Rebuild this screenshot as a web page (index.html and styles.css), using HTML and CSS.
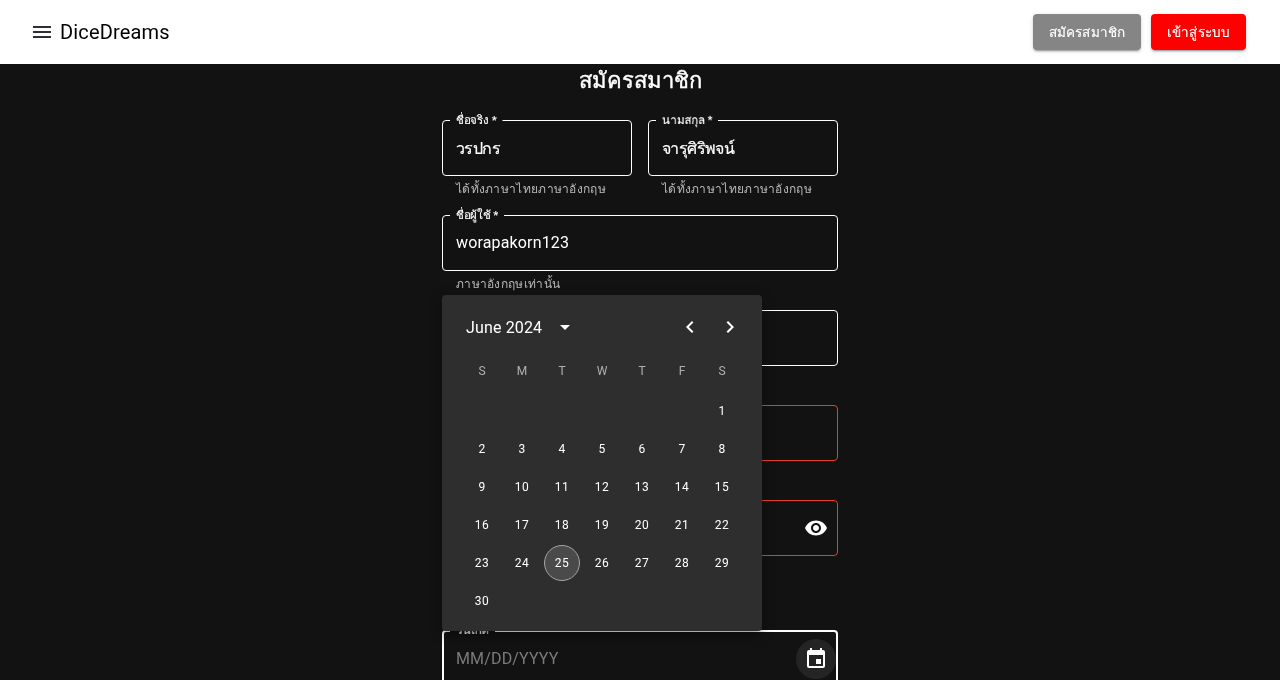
FILE: index.html
```html
<!DOCTYPE html>
<html lang="en">
  <head>
    <meta charset="UTF-8" />
    <meta name="viewport" content="width=device-width, initial-scale=1.0" />
    <title>DiceDreams</title>
    <link rel="stylesheet" href="styles.css">
  </head>
  <body>
    <header class="appbar">
      <div class="brand">
        <svg class="menu-icon" viewBox="0 0 24 24"><path d="M3 18h18v-2H3v2zm0-5h18v-2H3v2zm0-7v2h18V6H3z"/></svg>
        <span class="brand-name">DiceDreams</span>
      </div>
      <div class="actions">
        <button class="btn btn-grey">สมัครสมาชิก</button>
        <button class="btn btn-red">เข้าสู่ระบบ</button>
      </div>
    </header>

    <main class="page">
      <h1 class="page-title">สมัครสมาชิก</h1>

      <form class="form">
        <div class="row">
          <div class="field">
            <div class="box">
              <span class="label">ชื่อจริง *</span>
              <span class="value value-th">วรปกร</span>
            </div>
            <p class="help">ได้ทั้งภาษาไทยภาษาอังกฤษ</p>
          </div>
          <div class="field">
            <div class="box">
              <span class="label">นามสกุล *</span>
              <span class="value value-th">จารุศิริพจน์</span>
            </div>
            <p class="help">ได้ทั้งภาษาไทยภาษาอังกฤษ</p>
          </div>
        </div>

        <div class="field">
          <div class="box">
            <span class="label">ชื่อผู้ใช้ *</span>
            <span class="value value-latin">worapakorn123</span>
          </div>
          <p class="help">ภาษาอังกฤษเท่านั้น</p>
        </div>

        <div class="field">
          <div class="box"></div>
        </div>

        <div class="field">
          <div class="box box-error"></div>
        </div>

        <div class="field field-tall">
          <div class="box box-error">
            <svg class="eye-icon" viewBox="0 0 24 24"><path d="M12 4.5C7 4.5 2.73 7.61 1 12c1.73 4.39 6 7.5 11 7.5s9.27-3.11 11-7.5c-1.73-4.39-6-7.5-11-7.5zM12 17c-2.76 0-5-2.24-5-5s2.24-5 5-5 5 2.24 5 5-2.24 5-5 5zm0-8c-1.66 0-3 1.34-3 3s1.34 3 3 3 3-1.34 3-3-1.34-3-3-3z"/></svg>
          </div>
        </div>

        <div class="field">
          <div class="box box-focus">
            <span class="label">วันเกิด</span>
            <span class="value placeholder">MM/DD/YYYY</span>
            <span class="cal-btn">
              <svg class="cal-icon" viewBox="0 0 24 24"><path d="M17 12h-5v5h5v-5zM16 1v2H8V1H6v2H5c-1.11 0-1.99.9-1.99 2L3 19c0 1.1.89 2 2 2h14c1.1 0 2-.9 2-2V5c0-1.1-.9-2-2-2h-1V1h-2zm3 18H5V8h14v11z"/></svg>
            </span>
          </div>
        </div>
      </form>

      <div class="picker">
        <div class="picker-head">
          <div class="month">
            <span>June 2024</span>
            <svg class="caret" viewBox="0 0 24 24"><path d="M7 10l5 5 5-5z"/></svg>
          </div>
          <div class="nav">
            <svg class="nav-icon" viewBox="0 0 24 24"><path d="M15.41 7.41 14 6l-6 6 6 6 1.41-1.41L10.83 12z"/></svg>
            <svg class="nav-icon" viewBox="0 0 24 24"><path d="M10 6 8.59 7.41 13.17 12l-4.58 4.59L10 18l6-6z"/></svg>
          </div>
        </div>
        <div class="weekdays">
          <span>S</span><span>M</span><span>T</span><span>W</span><span>T</span><span>F</span><span>S</span>
        </div>
        <div class="days">
          <span class="day day-1">1</span>
          <span class="day">2</span><span class="day">3</span><span class="day">4</span><span class="day">5</span><span class="day">6</span><span class="day">7</span><span class="day">8</span>
          <span class="day">9</span><span class="day">10</span><span class="day">11</span><span class="day">12</span><span class="day">13</span><span class="day">14</span><span class="day">15</span>
          <span class="day">16</span><span class="day">17</span><span class="day">18</span><span class="day">19</span><span class="day">20</span><span class="day">21</span><span class="day">22</span>
          <span class="day">23</span><span class="day">24</span><span class="day today">25</span><span class="day">26</span><span class="day">27</span><span class="day">28</span><span class="day">29</span>
          <span class="day">30</span>
        </div>
      </div>
    </main>
  </body>
</html>
```

FILE: styles.css
```css
* {
  margin: 0;
  padding: 0;
  box-sizing: border-box;
}

html,
body {
  height: 100%;
  overflow: hidden;
}

body {
  background: #121212;
  color: #fff;
  font-family: Roboto, Helvetica, Arial, sans-serif;
}

.appbar {
  height: 64px;
  background: #fff;
  color: #000;
  display: flex;
  justify-content: space-between;
  align-items: center;
  padding: 0 34px 0 30px;
}

.brand {
  display: flex;
  align-items: center;
  gap: 6px;
  will-change: transform;
}

.menu-icon {
  width: 24px;
  height: 24px;
  fill: #2c2f36;
}

.brand-name {
  font-size: 20px;
  line-height: 32px;
  letter-spacing: 0.15px;
}

.actions {
  display: flex;
  gap: 10px;
  will-change: transform;
}

.btn {
  height: 36px;
  padding: 0 16px;
  border: 0;
  border-radius: 4px;
  color: #fff;
  font-family: Roboto, Helvetica, Arial, sans-serif;
  font-size: 13.5px;
  font-weight: 500;
  letter-spacing: 0.12px;
  -webkit-text-stroke: 0.15px #fff;
  box-shadow: 0 3px 1px -2px rgba(0, 0, 0, 0.2), 0 2px 2px rgba(0, 0, 0, 0.14),
    0 1px 5px rgba(0, 0, 0, 0.12);
}

.btn-grey {
  background: #858585;
}

.btn-red {
  background: #ff0000;
}

.page {
  position: relative;
  width: 396px;
  margin: 0 auto;
  will-change: transform;
}

.page-title {
  font-size: 22px;
  font-weight: 500;
  -webkit-text-stroke: 0.4px #fff;
  line-height: 34px;
  text-align: center;
}

.form {
  margin-top: 22px;
  display: flex;
  flex-direction: column;
}

.row {
  display: flex;
  gap: 16px;
}

.row .field {
  flex: 1;
}

.field {
  height: 95px;
}

.field-tall {
  height: 130px;
}

.box {
  position: relative;
  height: 56px;
  border: 1px solid #fff;
  border-radius: 4px;
  display: flex;
  align-items: center;
  padding: 0 13px;
}

.box-error {
  border-color: #e53e30;
}

.box-focus {
  border-width: 2px;
  padding: 0 12px;
}

.label {
  position: absolute;
  top: -9px;
  left: 7px;
  padding: 0 8px;
  background: #121212;
  font-size: 15.4px;
  line-height: 23px;
  white-space: nowrap;
  -webkit-text-stroke: 0.15px #fff;
  transform: scale(0.75);
  transform-origin: top left;
}

.box-focus .label {
  top: -10px;
  left: 6px;
}

.value {
  font-size: 16px;
  line-height: 23px;
  letter-spacing: 0.15px;
}

.value-th {
  letter-spacing: -0.6px;
  -webkit-text-stroke: 0.2px #fff;
}

.value-latin {
  margin-top: -2px;
}

.placeholder {
  color: #7b7b7b;
}

.help {
  margin: 3px 14px 0;
  font-size: 12px;
  line-height: 20px;
  letter-spacing: 0.3px;
  color: #b8b8b8;
}

.eye-icon {
  position: absolute;
  right: 9px;
  top: 15px;
  width: 24px;
  height: 24px;
  fill: #fff;
}

.cal-btn {
  position: absolute;
  right: 0;
  top: 7px;
  width: 40px;
  height: 40px;
  border-radius: 50%;
  background: #242424;
  display: flex;
  align-items: center;
  justify-content: center;
}

.cal-icon {
  width: 24px;
  height: 24px;
  fill: #fff;
}

.picker {
  position: absolute;
  top: 231px;
  left: 0;
  width: 320px;
  height: 336px;
  background: #2e2e2e;
  border-radius: 4px;
  box-shadow: 0 5px 5px -3px rgba(0, 0, 0, 0.2), 0 8px 10px 1px rgba(0, 0, 0, 0.14),
    0 3px 14px 2px rgba(0, 0, 0, 0.12);
  padding: 16px 20px 0 24px;
}

.picker-head {
  height: 32px;
  display: flex;
  justify-content: space-between;
  align-items: center;
}

.month {
  display: flex;
  align-items: center;
  gap: 11px;
  font-size: 16px;
  letter-spacing: 0.15px;
}

.caret {
  width: 24px;
  height: 24px;
  fill: #fff;
}

.nav {
  display: flex;
  gap: 16px;
}

.nav-icon {
  width: 24px;
  height: 24px;
  fill: #fff;
}

.weekdays,
.days {
  display: grid;
  grid-template-columns: repeat(7, 36px);
  column-gap: 4px;
  margin-left: -2px;
}

.weekdays {
  margin-top: 8px;
  height: 40px;
  align-items: center;
  justify-items: center;
  font-size: 12px;
  color: #b0b0b0;
}

.days {
  grid-auto-rows: 36px;
  row-gap: 2px;
  margin-top: 2px;
  font-size: 12px;
}

.day {
  display: flex;
  align-items: center;
  justify-content: center;
  border-radius: 50%;
  letter-spacing: 0.4px;
}

.day-1 {
  grid-column: 7;
}

.today {
  background: #4a4a4a;
  border: 1px solid #a6a6a6;
}
```
